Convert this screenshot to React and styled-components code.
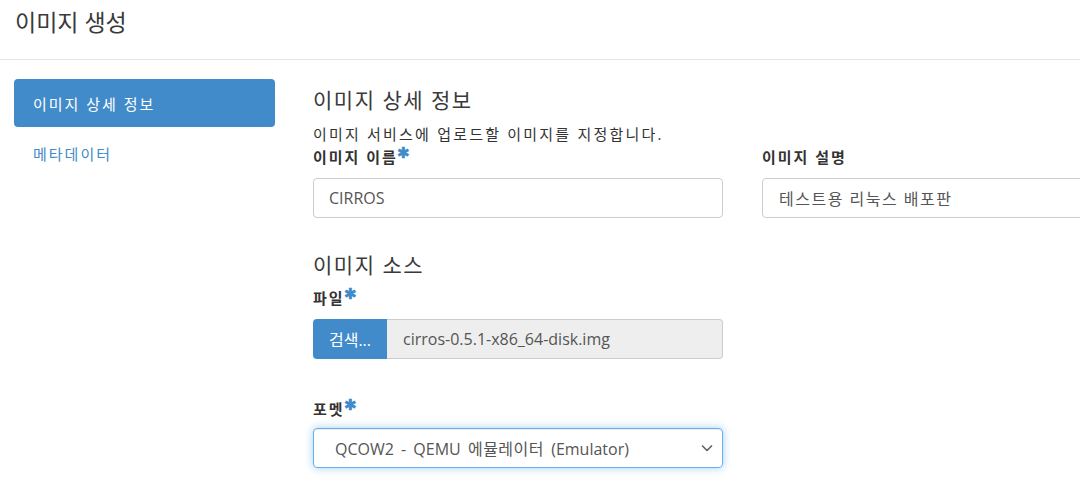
import React from 'react';
import styled, { createGlobalStyle } from 'styled-components';

const GlobalStyle = createGlobalStyle`
  html, body {
    margin: 0;
    padding: 0;
    background: #fff;
  }
  body {
    font-family: "Open Sans", "Noto Sans CJK KR", sans-serif;
    color: #333;
  }
  * { box-sizing: border-box; }
`;

function Required() {
    return <Star>✱</Star>;
}

function App() {
    return (
        <>
            <GlobalStyle />
            <Page>
                <Header>
                    <HeaderTitle>이미지 생성</HeaderTitle>
                </Header>

                <Body>
                    <SideNav>
                        <NavItem active>이미지 상세 정보</NavItem>
                        <NavItem>메타데이터</NavItem>
                    </SideNav>

                    <Main>
                        <SectionTitle>이미지 상세 정보</SectionTitle>
                        <HelpText>이미지 서비스에 업로드할 이미지를 지정합니다.</HelpText>

                        <FieldRow>
                            <Field top="3px">
                                <Label>이미지 이름<Required /></Label>
                                <TextInput>CIRROS</TextInput>
                            </Field>
                            <Field top="3px">
                                <Label>이미지 설명</Label>
                                <TextInput korean>테스트용 리눅스 배포판</TextInput>
                            </Field>
                        </FieldRow>

                        <SectionTitle top="33px">이미지 소스</SectionTitle>

                        <Field top="9px">
                            <Label>파일<Required /></Label>
                            <FileGroup>
                                <BrowseButton>검색...</BrowseButton>
                                <FileName>cirros-0.5.1-x86_64-disk.img</FileName>
                            </FileGroup>
                        </Field>

                        <Field top="40px">
                            <Label>포멧<Required /></Label>
                            <SelectBox>
                                <SelectText>QCOW2 - QEMU <Ko>에뮬레이터</Ko> (Emulator)</SelectText>
                                {/* 셀렉트 화살표 */}
                                <svg width="14" height="14" viewBox="0 0 14 14">
                                    <path d="M2.5 5 L7 9.5 L11.5 5" fill="none" stroke="#666" strokeWidth="1.7" strokeLinecap="round" strokeLinejoin="round" />
                                </svg>
                            </SelectBox>
                        </Field>
                    </Main>
                </Body>
            </Page>
        </>
    );
}

export default App;


const Page = styled.div`
    width: 1080px;
    height: 482px;
    overflow: hidden;
`

const Header = styled.div`
    height: 60px;
    border-bottom: 1px solid #e5e5e5;
    padding: 7px 15px 0;
`

const HeaderTitle = styled.h4`
    margin: 0;
    font-size: 23px;
    font-weight: 400;
    line-height: 30px;
    color: #3a3a3a;
`

const Body = styled.div`
    display: flex;
    padding: 19px 0 0 14px;
`

const SideNav = styled.div`
    width: 261px;
    flex-shrink: 0;
    display: flex;
    flex-direction: column;
    gap: 2px;
`

const NavItem = styled.div`
    height: 48px;
    padding: 0 19px;
    display: flex;
    align-items: center;
    border-radius: 4px;
    font-size: 15px;
    letter-spacing: 2px;
    background-color: ${p => (p.active ? '#428bca' : 'transparent')};
    color: ${p => (p.active ? '#fff' : '#428bca')};
    cursor: pointer;
`

const Main = styled.div`
    margin-left: 38px;
    flex: 1;
    display: flex;
    flex-direction: column;
    padding-top: 7px;
`

const SectionTitle = styled.h3`
    margin: ${p => p.top || '0'} 0 0;
    font-size: 21px;
    font-weight: 400;
    letter-spacing: 1.5px;
    line-height: 28px;
    color: #3a3a3a;
`

const HelpText = styled.p`
    margin: 10px 0 0;
    font-size: 15px;
    letter-spacing: 2.2px;
    line-height: 20px;
    color: #333;
`

const FieldRow = styled.div`
    display: flex;
    gap: 39px;
`

const Field = styled.div`
    width: 410px;
    flex-shrink: 0;
    display: flex;
    flex-direction: column;
    margin-top: ${p => p.top || '0'};
`

const Label = styled.label`
    margin-bottom: 11px;
    font-size: 15px;
    font-weight: 700;
    letter-spacing: 2px;
    line-height: 20px;
    color: #333;
`

const Star = styled.span`
    color: #428bca;
    font-size: 15px;
    letter-spacing: 0;
    vertical-align: top;
    position: relative;
    top: -5px;
    margin-left: -1px;
`

const TextInput = styled.div`
    height: 40px;
    border: 1px solid #ccc;
    border-radius: 4px;
    padding: 0 ${p => (p.korean ? '16px' : '15px')};
    display: flex;
    align-items: center;
    font-size: 16px;
    letter-spacing: ${p => (p.korean ? '1.5px' : '0')};
    color: #555;
    background: #fff;
`

const FileGroup = styled.div`
    display: flex;
    height: 40px;
`

const BrowseButton = styled.div`
    width: 74px;
    background-color: #428bca;
    border-radius: 4px 0 0 4px;
    color: #fff;
    font-size: 16px;
    display: flex;
    align-items: center;
    justify-content: center;
`

const FileName = styled.div`
    flex: 1;
    background-color: #eee;
    border: 1px solid #ccc;
    border-left: none;
    border-radius: 0 4px 4px 0;
    padding-left: 16px;
    display: flex;
    align-items: center;
    font-size: 16px;
    color: #555;
`

const SelectBox = styled.div`
    height: 40px;
    margin-top: -2px;
    border: 1px solid #66afe9;
    border-radius: 4px;
    box-shadow: inset 0 1px 1px rgba(0,0,0,.075), 0 0 8px rgba(102,175,233,.6);
    padding: 0 8px 0 21px;
    display: flex;
    align-items: center;
    justify-content: space-between;
    color: #555;
`

const SelectText = styled.span`
    font-size: 16px;
    word-spacing: 3px;
`

const Ko = styled.span`
    letter-spacing: 0.5px;
`
